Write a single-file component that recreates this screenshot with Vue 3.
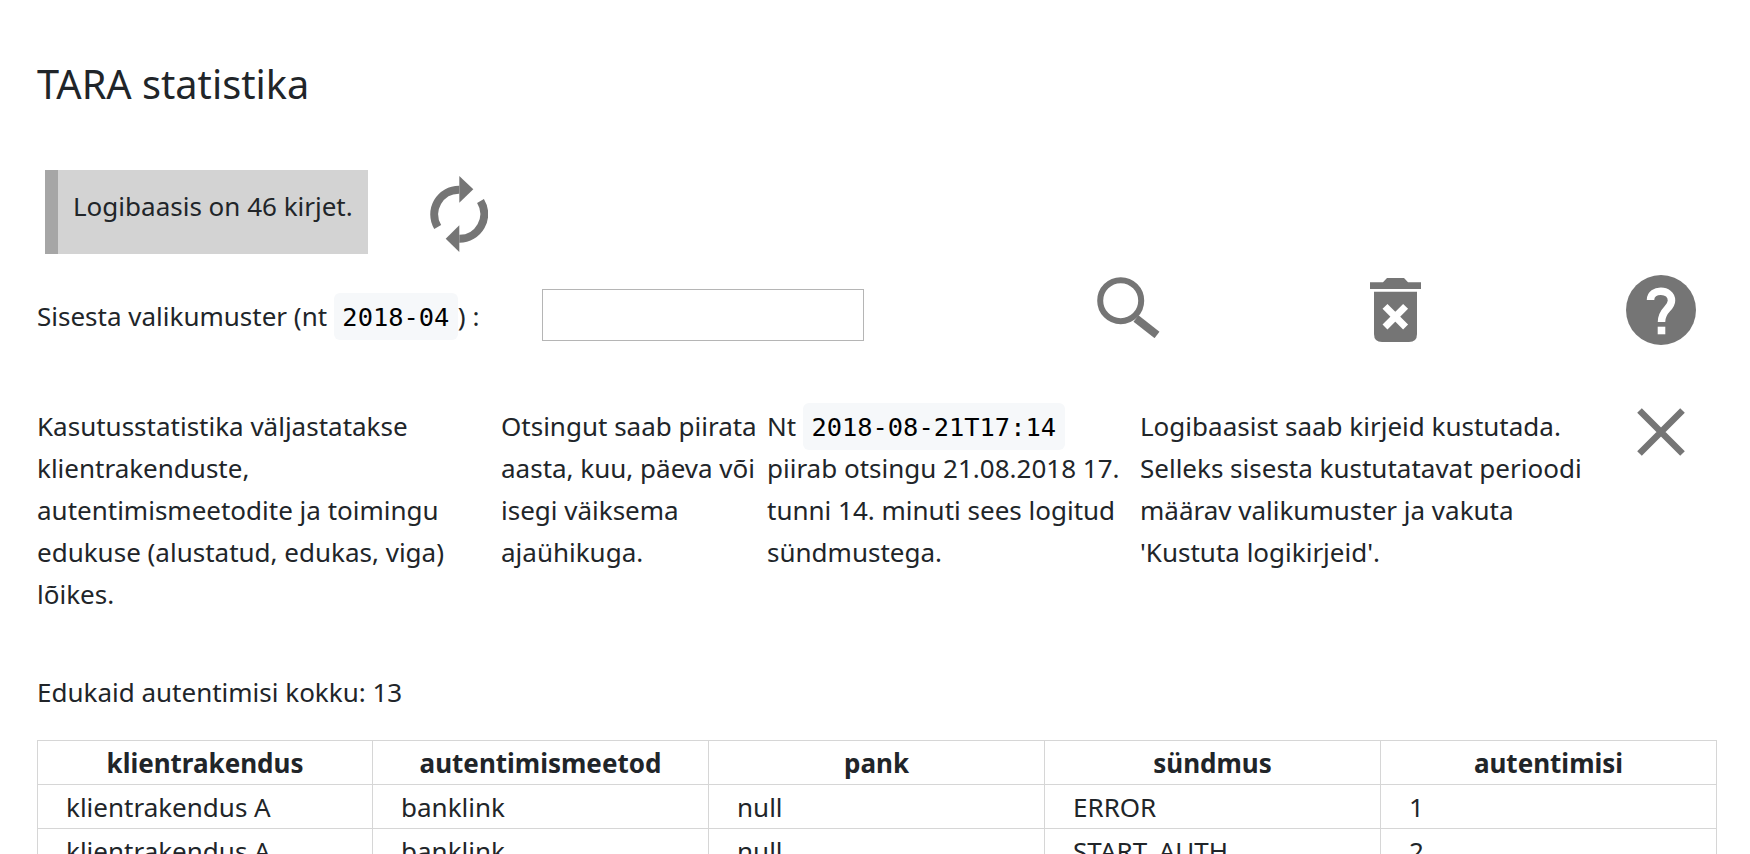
<script setup>
const columns = ['klientrakendus', 'autentimismeetod', 'pank', 'sündmus', 'autentimisi']

const rows = [
  ['klientrakendus A', 'banklink', 'null', 'ERROR', 1],
  ['klientrakendus A', 'banklink', 'null', 'START_AUTH', 2],
]
</script>

<template>
  <div class="page">
    <h1 class="title">TARA statistika</h1>

    <div class="status-row">
      <div class="status-box">Logibaasis on 46 kirjet.</div>
      <svg class="icon-refresh" viewBox="0 0 58 76">
        <path d="M7.7 51A24.7 24.7 0 0 1 29.3 13.7" fill="none" stroke="#757575" stroke-width="8" />
        <path d="M29.3 0L43.3 13.3L29.3 26.7Z" fill="#757575" />
        <path d="M50.5 25A24.7 24.7 0 0 1 29.3 62.7" fill="none" stroke="#757575" stroke-width="8" />
        <path d="M29.3 49.3L15.7 62.7L29.3 76Z" fill="#757575" />
      </svg>
    </div>

    <div class="filter-row">
      <label class="filter-label">Sisesta valikumuster (nt <code>2018-04</code>) :</label>
      <input class="filter-input" type="text" />
      <svg class="icon-search" viewBox="0 0 63 61">
        <circle cx="23.7" cy="23.7" r="20.5" fill="none" stroke="#757575" stroke-width="6" />
        <path d="M39 41.5L60 58" fill="none" stroke="#757575" stroke-width="8" />
      </svg>
      <svg class="icon-trash" viewBox="0 0 51 64">
        <path d="M0 4.3H13L17 0H34L38 4.3H51V11H0Z" fill="#757575" />
        <path d="M4 13.7H47V56Q47 64 39 64H12Q4 64 4 56Z" fill="#757575" />
        <path d="M15 28.4L35.6 49M35.6 28.4L15 49" fill="none" stroke="#fff" stroke-width="7" />
      </svg>
      <svg class="icon-help" viewBox="0 0 70 70">
        <circle cx="35" cy="35" r="35" fill="#757575" />
        <path d="M24.5 25C24.5 13 45.5 13.5 45.5 25.5C45.5 34 35.5 34 35.5 47" fill="none" stroke="#fff" stroke-width="7.5" />
        <rect x="31.7" y="51.7" width="7.6" height="7.6" fill="#fff" />
      </svg>
    </div>

    <div class="help-row">
      <p class="help-a">Kasutusstatistika väljastatakse klientrakenduste, autentimismeetodite ja toimingu edukuse (alustatud, edukas, viga) lõikes.</p>
      <p class="help-b">Otsingut saab piirata aasta, kuu, päeva või isegi väiksema ajaühikuga.</p>
      <p class="help-c">Nt <code>2018-08-21T17:14</code> piirab otsingu 21.08.2018 17. tunni 14. minuti sees logitud sündmustega.</p>
      <p class="help-d">Logibaasist saab kirjeid kustutada. Selleks sisesta kustutatavat perioodi määrav valikumuster ja vakuta 'Kustuta logikirjeid'.</p>
      <svg class="icon-close" viewBox="0 0 48 48">
        <path d="M2.5 2.5L45.5 45.5M45.5 2.5L2.5 45.5" fill="none" stroke="#757575" stroke-width="6.5" />
      </svg>
    </div>

    <p class="total">Edukaid autentimisi kokku: 13</p>

    <table class="stats">
      <thead>
        <tr>
          <th v-for="column in columns" :key="column">{{ column }}</th>
        </tr>
      </thead>
      <tbody>
        <tr v-for="(row, i) in rows" :key="i">
          <td v-for="(cell, j) in row" :key="j">{{ cell }}</td>
        </tr>
      </tbody>
    </table>
  </div>
</template>

<style>
html,
body {
  overflow: hidden;
  height: 100%;
}
</style>

<style scoped>
.page {
  padding: 0 33px 0 37px;
  font-family: 'Noto Sans', sans-serif;
  font-size: 26px;
  line-height: 42px;
  color: #212529;
}

.title {
  margin: 0;
  padding-top: 56px;
  font-size: 39.7px;
  font-weight: 400;
  line-height: 56px;
}

.status-row {
  display: flex;
  align-items: center;
  margin-top: 58px;
  margin-left: 8px;
}

.status-box {
  width: 323px;
  height: 84px;
  box-sizing: border-box;
  padding: 15px 0 0 15px;
  background: #d3d3d3;
  border-left: 13px solid #a6a6a6;
}

.icon-refresh {
  width: 58px;
  height: 76px;
  margin: 4px 0 0 62px;
}

.filter-row {
  display: flex;
  align-items: flex-start;
  margin-top: 21px;
}

code {
  padding: 8.5px;
  font-family: 'DejaVu Sans Mono', monospace;
  font-size: 25.4px;
  vertical-align: 1px;
  color: #000;
  background: #f6f8fa;
  border-radius: 6px;
}

.filter-label {
  width: 505px;
  margin-top: 20px;
}

.filter-input {
  width: 322px;
  height: 52px;
  margin-top: 14px;
  box-sizing: border-box;
  border: 1px solid #b5b5b5;
}

.icon-search {
  width: 63px;
  height: 61px;
  margin: 2px 0 0 233px;
}

.icon-trash {
  width: 51px;
  height: 64px;
  margin: 3px 0 0 210px;
}

.icon-help {
  width: 70px;
  height: 70px;
  margin-left: 205px;
}

.help-row {
  display: flex;
  margin-top: 60px;
}

.help-row p {
  margin: 0;
}

.help-a {
  width: 464px;
  padding-right: 30px;
  box-sizing: border-box;
}

.help-b {
  width: 266px;
}

.help-c {
  width: 373px;
  padding-right: 13px;
  box-sizing: border-box;
}

.help-d {
  width: 451px;
}

.icon-close {
  width: 48px;
  height: 48px;
  margin: 3px 0 0 46px;
}

.total {
  margin: 56px 0 0;
}

.stats {
  width: 1680px;
  margin: 27px 0 0;
  table-layout: fixed;
  border-collapse: collapse;
}

.stats th,
.stats td {
  border: 1px solid #d6d6d6;
}

.stats th {
  width: 335px;
  height: 43px;
  padding: 0;
  font-weight: 700;
  text-align: center;
}

.stats th:first-child {
  width: 334px;
}

.stats th:last-child {
  width: auto;
}

.stats td {
  height: 43px;
  padding: 0 0 0 28px;
}
</style>
